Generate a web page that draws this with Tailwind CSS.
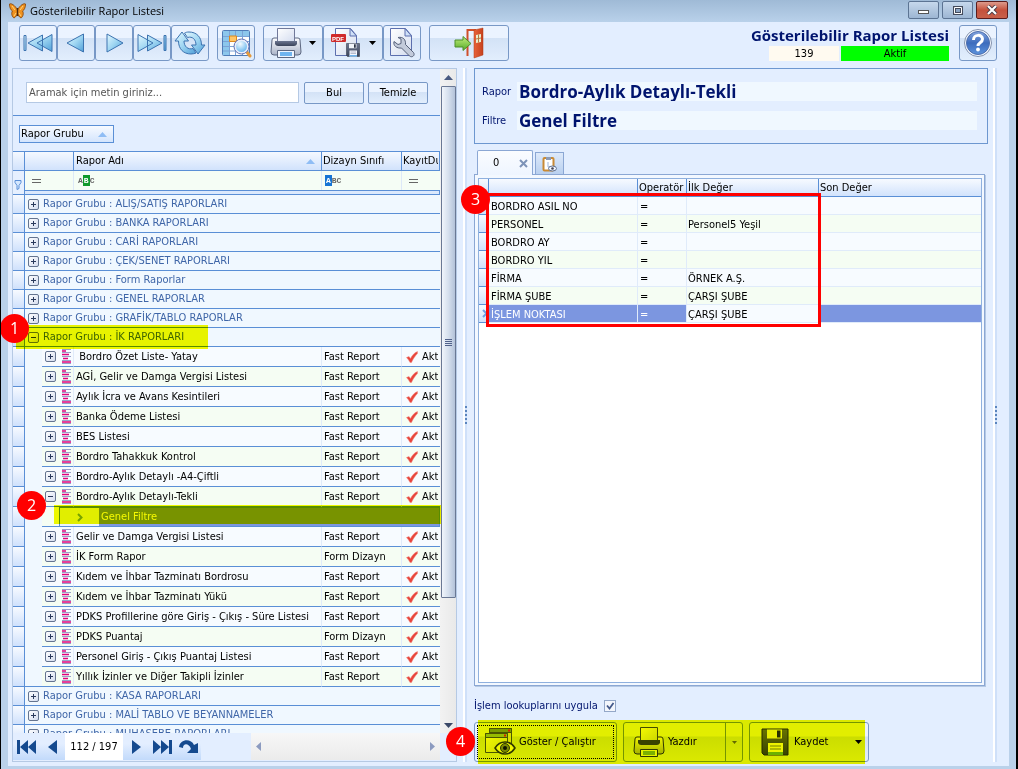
<!DOCTYPE html>
<html lang="tr">
<head>
<meta charset="utf-8">
<title>Gösterilebilir Rapor Listesi</title>
<script src="https://cdn.jsdelivr.net/npm/@tailwindcss/browser@4"></script>
</head>
<body class="relative flex h-screen flex-col overflow-hidden border-r-2 border-l border-black bg-[#bad1ea] font-['DejaVu_Sans_Condensed','DejaVu_Sans',sans-serif] text-[11px] leading-[14px] text-black">

<svg class="absolute h-0 w-0" aria-hidden="true">
  <defs>
    <linearGradient id="gArrow" x1="0" y1="0" x2="1" y2="1"><stop offset="0" stop-color="#e4f8ff"/><stop offset=".5" stop-color="#9fd6f2"/><stop offset="1" stop-color="#4f9fd8"/></linearGradient>
    <linearGradient id="gGrey" x1="0" y1="0" x2="0" y2="1"><stop offset="0" stop-color="#fdfdff"/><stop offset="1" stop-color="#aab4c8"/></linearGradient>
    <linearGradient id="gPage" x1="0" y1="0" x2="1" y2="1"><stop offset="0" stop-color="#ffffff"/><stop offset="1" stop-color="#d3dcef"/></linearGradient>
    <linearGradient id="gDark" x1="0" y1="0" x2="0" y2="1"><stop offset="0" stop-color="#6c7690"/><stop offset="1" stop-color="#3a4359"/></linearGradient>
    <radialGradient id="gLens" cx=".4" cy=".3" r=".8"><stop offset="0" stop-color="#f4fcff"/><stop offset="1" stop-color="#4aa8ea"/></radialGradient>
    <linearGradient id="gHelp" x1="0" y1="0" x2="0" y2="1"><stop offset="0" stop-color="#85a5de"/><stop offset=".5" stop-color="#3d6cbd"/><stop offset="1" stop-color="#5c93dc"/></linearGradient>
    <linearGradient id="gDoor" x1="0" y1="0" x2="1" y2="0"><stop offset="0" stop-color="#e8623a"/><stop offset="1" stop-color="#c5401c"/></linearGradient>
    <linearGradient id="gGreen" x1="0" y1="0" x2="0" y2="1"><stop offset="0" stop-color="#c3ee7c"/><stop offset="1" stop-color="#55ab28"/></linearGradient>

    <symbol id="expand" viewBox="0 0 11 11"><rect x=".5" y=".5" width="10" height="10" rx="1.5" fill="url(#gPage)" stroke="#64748f"/><path d="M3 5.5h5M5.500 3v5" stroke="#2a3a5c"/></symbol>
    <symbol id="collapse" viewBox="0 0 11 11"><rect x=".5" y=".5" width="10" height="10" rx="1.5" fill="url(#gPage)" stroke="#64748f"/><path d="M3 5.5h5" stroke="#2a3a5c"/></symbol>
    <symbol id="report" viewBox="0 0 9 15"><path d="M0 .5h9M0 3.500h9M0 7.500h9M0 11.500h9M0 14.500h9" stroke="#98a1c8"/><path d="M0 2h4M0 5.500h7M1 9.500h5M0 13h9" stroke="#e0007c" stroke-width="1.600"/></symbol>
    <symbol id="tick" viewBox="0 0 12 12"><path d="M.5 6.500 3 5.500l1.500 2C6 4.500 8.500 1.500 11.500.5v2C9 5 7 8 5.500 11.500H4C3 9.500 2 8 .5 6.500Z" fill="#e8453c" stroke="#f08a80" stroke-width=".5"/></symbol>
    <symbol id="printer" viewBox="0 0 32 32">
      <path d="M2 13q0-2 2-2h24q2 0 2 2l1 12q0 3-3 3H4q-3 0-3-3Z" fill="url(#gGrey)" stroke="#5d6881"/>
      <path d="M7.500 1.500h17V15h-17Z" fill="url(#gPage)" stroke="#71799a"/>
      <path d="M5 14h22v3q-1 2-3 2H8q-2 0-3-2Z" fill="url(#gDark)"/>
      <path d="M7.500 23.500h17v7h-17Z" fill="#eef5ff" stroke="#5d6881"/><path d="M10 25h12v4H10Z" fill="#6fb4ee"/>
    </symbol>
    <symbol id="printerDark" viewBox="0 0 32 32">
      <path d="M2 13q0-2 2-2h24q2 0 2 2l1 12q0 3-3 3H4q-3 0-3-3Z" fill="url(#gGrey)" stroke="#2f3745"/>
      <path d="M7.500 1.500h17V15h-17Z" fill="url(#gPage)" stroke="#454d5e"/>
      <path d="M5 14h22v3q-1 2-3 2H8q-2 0-3-2Z" fill="#3b4354"/>
      <path d="M7.500 23.500h17v7h-17Z" fill="#eef5ff" stroke="#2f3745"/><path d="M10 25h12v4H10Z" fill="#7eb44c"/>
    </symbol>
    <symbol id="floppy" viewBox="0 0 28 28">
      <path d="M1 1h26v26H3l-2-2Z" fill="url(#gDark)" stroke="#262d3c"/>
      <path d="M6 1.500h15v9H6Z" fill="#f1f4fa"/><path d="M16 2.500h3.500v7H16Z" fill="#2a3244"/>
      <path d="M7 15h15v12H7Z" fill="#f6f8ff"/><path d="M9 18h11M9 21h11" stroke="#79839c"/><path d="M7 24h15v3H7Z" fill="#6fb4ee"/>
    </symbol>
  </defs>
</svg>

<!-- Title bar -->
<header class="flex h-[22px] shrink-0 items-start bg-linear-to-b from-[#9fbad6] to-[#b9d1ea] pr-[8px] pl-[8px]">
  <svg class="mt-[3px] h-[16px] w-[17px]" viewBox="0 0 17 16"><path d="M8.500 7C6 2 2 0 .5 1c0 3 1 6 3 7C2 10 3 14 5 15c2-1 3-3 3.500-5 .5 2 1.500 4 3.500 5 2-1 3-5 1.500-7 2-1 3-4 3-7C15 0 11 2 8.500 7Z" fill="#f0921e" stroke="#8b4a0c" stroke-width=".9"/><path d="M8.500 5v8" stroke="#4d2a0c" stroke-width="1.400"/><path d="m3 3 3 4M14 3l-3 4M5 13l2-3M12 13l-2-3" stroke="#ffd37a"/></svg>
  <h1 class="ml-[4px] pt-[3px] font-['Open_Sans',sans-serif] text-[11px] leading-[16px]">Gösterilebilir Rapor Listesi</h1>
  <div class="ml-auto flex gap-[3px] pt-px">
    <button aria-label="Küçült" class="flex h-[18px] w-[31px] items-center justify-center rounded-[2px] border border-[#5c7493] bg-linear-to-b from-[#c6d8ec] to-[#9db6d3]"><span class="mt-[4px] block h-[4px] w-[11px] border border-[#555] bg-white"></span></button>
    <button aria-label="Büyüt" class="flex h-[18px] w-[31px] items-center justify-center rounded-[2px] border border-[#5c7493] bg-linear-to-b from-[#c6d8ec] to-[#9db6d3]"><svg class="h-[9px] w-[10px]" viewBox="0 0 10 9"><path d="M1.500 1.500h7v6h-7Z" fill="#8aa3c2" stroke="#444b5c" stroke-width="3"/><path d="M1.500 1.500h7v6h-7Z" fill="none" stroke="#fff"/></svg></button>
    <button aria-label="Kapat" class="flex h-[18px] w-[32px] items-center justify-center rounded-[2px] border border-[#5b1d1d] bg-linear-to-b from-[#dd9a8c] via-[#c5513c] to-[#c8604a]"><svg class="h-[10px] w-[12px]" viewBox="0 0 12 10"><path d="m2 1 8 8M10 1 2 9" stroke="#4a3a44" stroke-width="4"/><path d="m2 1 8 8M10 1 2 9" stroke="#fff" stroke-width="2.200"/></svg></button>
  </div>
</header>

<div class="mr-[7px] mb-[3px] ml-[7px] flex min-h-0 flex-1 flex-col bg-[#e3eeff]">

  <!-- Toolbar -->
  <div class="flex h-[46px] shrink-0 items-start pt-[3px] pr-[12px] pl-[11px]">
    <div class="flex">
      <button aria-label="İlk" class="flex h-[36px] w-[38px] items-center justify-center rounded-[3px] border border-[#7898c6] bg-linear-to-b from-[#ebf3ff] from-35% via-[#d3e2f6] via-36% to-[#e2eefd]"><svg class="h-[20px] w-[30px]" viewBox="0 0 30 20"><path d="M1 2.500h2v15H1ZM19.500 2v16L5 10ZM29 1.500v17L14 10Z" fill="url(#gArrow)" stroke="#3c73b0"/></svg></button>
      <button aria-label="Önceki" class="flex h-[36px] w-[38px] items-center justify-center rounded-[3px] border border-[#7898c6] bg-linear-to-b from-[#ebf3ff] from-35% via-[#d3e2f6] via-36% to-[#e2eefd]"><svg class="h-[20px] w-[20px]" viewBox="0 0 20 20"><path d="M17.500 1v18L1 10Z" fill="url(#gArrow)" stroke="#3c73b0"/></svg></button>
      <button aria-label="Sonraki" class="flex h-[36px] w-[38px] items-center justify-center rounded-[3px] border border-[#7898c6] bg-linear-to-b from-[#ebf3ff] from-35% via-[#d3e2f6] via-36% to-[#e2eefd]"><svg class="h-[20px] w-[20px]" viewBox="0 0 20 20"><path d="M3 1v18L19 10Z" fill="url(#gArrow)" stroke="#3c73b0"/></svg></button>
      <button aria-label="Son" class="flex h-[36px] w-[38px] items-center justify-center rounded-[3px] border border-[#7898c6] bg-linear-to-b from-[#ebf3ff] from-35% via-[#d3e2f6] via-36% to-[#e2eefd]"><svg class="h-[20px] w-[30px]" viewBox="0 0 30 20"><path d="M27 2.500h2v15h-2ZM10.500 2v16L25 10ZM1 1.500v17L16 10Z" fill="url(#gArrow)" stroke="#3c73b0"/></svg></button>
      <button aria-label="Yenile" class="flex h-[36px] w-[38px] items-center justify-center rounded-[3px] border border-[#7898c6] bg-linear-to-b from-[#ebf3ff] from-35% via-[#d3e2f6] via-36% to-[#e2eefd]"><svg class="h-[26px] w-[32px]" viewBox="0 0 32 26"><path d="M8 2 1 11h3.500c0 8 5 13 12.500 13 2 0 3.500-.5 5-1l-3-4.500c-5 1.500-9-2-9-7.500h4.500Z" fill="url(#gArrow)" stroke="#3c73b0"/><path d="M24 24 31 15h-3.500c0-8-5-13-12.500-13-2 0-3 .3-4.500 1l3 4.500c5-1.500 8.500 2 8.500 7.500h-4.500Z" fill="url(#gArrow)" stroke="#3c73b0"/></svg></button>
    </div>
    <button aria-label="Tabloda ara" class="ml-[8px] flex h-[36px] w-[38px] items-center justify-center rounded-[3px] border border-[#7898c6] bg-linear-to-b from-[#ebf3ff] from-35% via-[#d3e2f6] via-36% to-[#e2eefd]"><svg class="h-[30px] w-[31px]" viewBox="0 0 31 30"><rect x="1.500" y="2.500" width="27" height="25" rx="1" fill="#fff" stroke="#4f7db8"/><path d="M2 3h26v5H2ZM2 3h6v24H2Z" fill="#8cc7ec"/><path d="M8.500 3v24M14.500 3v24M21.500 3v24M2 8.500h26M2 13.500h26M2 18.500h26M2 23h26" stroke="#7ba3d6"/><path d="M8.500 8h7v5.500h-7Z" fill="#ffc668" stroke="#dd8a1d"/><path d="m25 23 4 5" stroke="#e59a3c" stroke-width="3" stroke-linecap="round"/><circle cx="20.500" cy="18.500" r="6.500" fill="url(#gLens)" stroke="#e9eefb" stroke-width="2"/><circle cx="20.500" cy="18.500" r="7.500" fill="none" stroke="#6273b4"/></svg></button>
    <div class="ml-[8px] flex">
      <button aria-label="Yazıcı" class="flex h-[36px] w-[60px] items-center gap-[7px] rounded-[3px] border border-[#7898c6] bg-linear-to-b from-[#ebf3ff] from-35% via-[#d3e2f6] via-36% to-[#e2eefd] pl-[6px]"><svg class="h-[32px] w-[32px]"><use href="#printer"/></svg><svg class="h-[4px] w-[7px]" viewBox="0 0 7 4"><path d="M0 0h7L3.500 4Z"/></svg></button>
      <button aria-label="PDF kaydet" class="flex h-[36px] w-[60px] items-center gap-[7px] rounded-[3px] border border-[#7898c6] bg-linear-to-b from-[#ebf3ff] from-35% via-[#d3e2f6] via-36% to-[#e2eefd] pl-[6px]"><svg class="h-[32px] w-[32px]" viewBox="0 0 32 32"><path d="M5.500 1.500h15l6 7v20h-21Z" fill="url(#gPage)" stroke="#5c6fae"/><path d="M20 1.500V9h6.500Z" fill="#cfe0f8" stroke="#5c6fae"/><rect x="1" y="7" width="15" height="8" rx="1" fill="#d02b2b"/><text x="2" y="13.500" font-family="Liberation Sans" font-size="6" font-weight="700" fill="#fff">PDF</text><svg x="16" y="16" width="14" height="14"><use href="#floppy"/></svg></svg><svg class="h-[4px] w-[7px]" viewBox="0 0 7 4"><path d="M0 0h7L3.500 4Z"/></svg></button>
      <button aria-label="Ayarlar" class="flex h-[36px] w-[38px] items-center justify-center rounded-[3px] border border-[#7898c6] bg-linear-to-b from-[#ebf3ff] from-35% via-[#d3e2f6] via-36% to-[#e2eefd]"><svg class="h-[32px] w-[28px]" viewBox="0 0 28 32"><path d="M2.500 1.500h15l6 7v20h-21Z" fill="url(#gPage)" stroke="#5c6fae"/><path d="M17 1.500V9h6.500Z" fill="#cfe0f8" stroke="#5c6fae"/><path d="M6 14.500l4 3 3-1V12l-3-1.500c5-1 8 2 7.500 7l8 8c2 3-1.500 5.500-4 3.500l-8-8C9 21.500 5 19 6 14.500Z" fill="#c3cbdb" stroke="#56617a"/></svg></button>
    </div>
    <button aria-label="Çıkış" class="ml-[8px] flex h-[36px] w-[80px] items-center justify-center rounded-[3px] border border-[#7898c6] bg-linear-to-b from-[#ebf3ff] from-35% via-[#d3e2f6] via-36% to-[#e2eefd]"><svg class="h-[32px] w-[30px]" viewBox="0 0 30 32"><path d="M13.500 29V3H22" fill="none" stroke="#d0502c" stroke-width="2"/><path d="m20 3 9-2v27l-9 3Z" fill="url(#gDoor)" stroke="#b03a17" stroke-width=".5"/><path d="m22 8 5-1v8l-5 1Z" fill="#e9edcf"/><path d="M24.500 7.500v8M22 12l5-1" stroke="#b8763d"/><path d="M1 13h8V9.500l8 7-8 7V20H1Z" fill="url(#gGreen)" stroke="#4d8f2b"/></svg></button>

    <div class="ml-auto flex flex-col items-end">
      <div class="font-['Open_Sans',sans-serif] text-[15px] leading-[21px] font-bold text-[#00146e]">Gösterilebilir Rapor Listesi</div>
      <div class="flex gap-[2px] text-center leading-[15px]"><div class="w-[70px] bg-[#fffaf0]">139</div><div class="w-[108px] bg-[#00ff00]">Aktif</div></div>
    </div>
    <button aria-label="Yardım" class="ml-[10px] flex h-[36px] w-[38px] items-center justify-center rounded-[3px] border border-[#7898c6] bg-linear-to-b from-[#ebf3ff] from-35% via-[#d3e2f6] via-36% to-[#e2eefd]"><svg class="h-[30px] w-[30px]" viewBox="0 0 30 30"><circle cx="15" cy="15" r="13.500" fill="#f4f8ff" stroke="#8492ad"/><circle cx="15" cy="15" r="11.500" fill="url(#gHelp)" stroke="#4c6eae"/><path d="M10.500 12c0-6 9-6 9-1 0 4-4.500 3.500-4.500 7" fill="none" stroke="#fff" stroke-width="3"/><circle cx="15" cy="21.500" r="1.900" fill="#fff"/></svg></button>
  </div>

  <div class="flex min-h-0 flex-1 pl-[4px]">

    <!-- Report list -->
    <section class="mb-[4px] flex w-[445px] shrink-0 border border-[#b5c9e4]">
      <div class="flex min-w-0 flex-1 flex-col">
        <form class="flex h-[47px] shrink-0 items-start gap-[4px] border-b border-[#5a8fd6] pt-[13px] pl-[13px]" onsubmit="return false">
          <input type="text" aria-label="Ara" placeholder="Aramak için metin giriniz..." class="h-[21px] w-[273px] border border-[#b5c9e4] bg-white pl-[2px] placeholder:text-[#555]">
          <button class="ml-px h-[22px] w-[60px] rounded-[2px] border border-[#7898c6] bg-linear-to-b from-[#ebf3ff] from-45% via-[#d3e2f6] via-46% to-[#e2eefd]">Bul</button>
          <button class="h-[22px] w-[60px] rounded-[2px] border border-[#7898c6] bg-linear-to-b from-[#ebf3ff] from-45% via-[#d3e2f6] via-46% to-[#e2eefd]">Temizle</button>
        </form>
        <div class="h-[35px] shrink-0 pt-[9px] pl-[6px]">
          <button class="flex h-[18px] w-[95px] items-center justify-between border border-[#5a8fd6] bg-linear-to-b from-[#f7faff] to-[#d4e5fd] pr-[6px] pl-px">Rapor Grubu<svg class="h-[5px] w-[9px]" viewBox="0 0 9 5"><path d="M4.500 0 9 5H0Z" fill="#8fbdf5"/></svg></button>
        </div>
        <div class="min-h-0 flex-1 overflow-hidden">
          <table class="w-full table-fixed border-separate border-spacing-0 text-left whitespace-nowrap">
            <colgroup><col class="w-[12px]"><col class="w-[17px]"><col class="w-[32px]"><col><col class="w-[80px]"><col class="w-[38px]"></colgroup>
            <thead>
              <tr class="h-[20px] bg-linear-to-b from-[#f7faff] to-[#cfe1fc]">
                <th class="border-y border-r border-[#5a8fd6] p-0"></th><th colspan="2" class="border-y border-r border-[#5a8fd6] p-0"></th>
                <th class="border-y border-r border-[#5a8fd6] p-0 pl-[2px] font-normal"><div class="flex items-center justify-between pr-[6px]">Rapor Adı<svg class="h-[5px] w-[9px]" viewBox="0 0 9 5"><path d="M4.500 0 9 5H0Z" fill="#8fbdf5"/></svg></div></th>
                <th class="border-y border-r border-[#5a8fd6] p-0 pl-px font-normal">Dizayn Sınıfı</th>
                <th class="border-y border-r border-[#5a8fd6] p-0 pl-px font-normal"><div class="mr-px overflow-hidden">KayıtDurumu</div></th>
              </tr>
              <tr class="h-[19px] bg-[#f5fdf5]">
                <td class="border-r border-[#5a8fd6] bg-[#e6f0ff] p-0 align-bottom"><svg class="ml-[1px] h-[10px] w-[8px]" viewBox="0 0 8 10"><path d="M1 .5h6v2L5 5.500v3L3 9.500v-4L1 2.500Z" fill="#d5e8ff" stroke="#5a8fd6"/></svg></td>
                <td colspan="2" class="border-r border-[#dde9f8] p-0 pl-[7px]"><svg class="h-[4px] w-[9px]" viewBox="0 0 9 4"><path d="M0 .5h9M0 3.500h9" stroke="#666"/></svg></td>
                <td class="border-r border-[#dde9f8] p-0 pl-[4px]"><span class="flex font-['Liberation_Mono',monospace] text-[8px] leading-[11px] font-bold text-[#666]"><span>A</span><span class="bg-[#109a2c] px-px text-white">B</span><span>C</span></span></td>
                <td class="border-r border-[#dde9f8] p-0 pl-[3px]"><span class="flex font-['Liberation_Mono',monospace] text-[8px] leading-[11px] font-bold text-[#666]"><span class="bg-[#1674d4] px-px text-white">A</span><span>BC</span></span></td>
                <td class="p-0 pl-[7px]"><svg class="h-[4px] w-[9px]" viewBox="0 0 9 4"><path d="M0 .5h9M0 3.500h9" stroke="#666"/></svg></td>
              </tr>
              <tr class="h-[5px] leading-[0]"><td class="border-r border-b border-[#5a8fd6] bg-[#e6f0ff] p-0"></td><td colspan="5" class="border-y border-r border-[#5a8fd6] bg-[#dbe9fd] p-0"></td></tr>
            </thead>
            <tbody id="reports"></tbody>
          </table>
        </div>
        <!-- Navigator -->
        <div class="flex h-[28px] shrink-0 justify-between">
          <div class="flex h-[27px] items-center bg-linear-to-b from-[#e3eeff] from-40% to-[#c2dafb] text-[#154a8f]">
            <button aria-label="İlk kayıt" class="flex w-[26px] justify-center"><svg class="h-[14px] w-[19px]" viewBox="0 0 19 14"><path d="M0 0h3v14H0ZM11 0v14L3 7ZM19 0v14l-8-7Z" fill="currentColor"/></svg></button>
            <button aria-label="Önceki kayıt" class="flex w-[26px] justify-center"><svg class="h-[14px] w-[9px]" viewBox="0 0 9 14"><path d="M9 0v14L0 7Z" fill="currentColor"/></svg></button>
            <div class="h-[27px] w-[58px] bg-white text-center leading-[28px] text-black">112 / 197</div>
            <button aria-label="Sonraki kayıt" class="flex w-[26px] justify-center"><svg class="h-[14px] w-[9px]" viewBox="0 0 9 14"><path d="M0 0v14l9-7Z" fill="currentColor"/></svg></button>
            <button aria-label="Son kayıt" class="flex w-[26px] justify-center"><svg class="h-[14px] w-[19px]" viewBox="0 0 19 14"><path d="M16 0h3v14h-3ZM8 0v14l8-7ZM0 0v14l8-7Z" fill="currentColor"/></svg></button>
            <button aria-label="Git" class="flex w-[26px] justify-center"><svg class="h-[13px] w-[19px]" viewBox="0 0 19 13"><path d="M0 7C1-1 12-2 15 5l4-2v10H8l4-4C10 3 4 3 4 8Z" fill="currentColor"/></svg></button>
          </div>
          <div class="flex h-[27px] w-[189px] items-center justify-between bg-linear-to-b from-[#f7f7f7] to-[#ebebeb] px-[5px]">
            <svg class="h-[9px] w-[5px]" viewBox="0 0 5 9"><path d="M5 0v9L0 4.500Z" fill="#8c9bc0"/></svg>
            <svg class="h-[9px] w-[5px]" viewBox="0 0 5 9"><path d="M0 0v9l5-4.500Z" fill="#8c9bc0"/></svg>
          </div>
        </div>
      </div>
      <!-- Vertical scrollbar -->
      <div class="mb-[28px] flex w-[16px] shrink-0 flex-col items-center bg-linear-to-r from-[#f2f2f2] to-[#e9e9e9]">
        <svg class="my-[6px] h-[5px] w-[9px]" viewBox="0 0 9 5"><path d="M4.500 0 9 5H0Z" fill="#4a5a80"/></svg>
        <div class="flex h-[512px] w-[15px] flex-col items-center justify-center gap-px rounded-[1px] border border-[#6a7894] bg-linear-to-r from-[#f1f5fb] via-[#d5dfed] to-[#b3c2d9]"><span class="h-px w-[7px] bg-[#51618a]"></span><span class="h-px w-[7px] bg-[#51618a]"></span><span class="h-px w-[7px] bg-[#51618a]"></span><span class="h-px w-[7px] bg-[#51618a]"></span></div>
        <svg class="mt-auto mb-[5px] h-[5px] w-[9px]" viewBox="0 0 9 5"><path d="M0 0h9L4.500 5Z" fill="#3a4867"/></svg>
      </div>
    </section>

    <!-- Splitter -->
    <div class="mr-[7px] mb-[4px] ml-[6px] flex w-[4px] shrink-0 items-center border-l-2 border-white bg-[#cfe0f9]"><svg class="h-[18px] w-[2px]" viewBox="0 0 2 18"><path d="M1 0v18" stroke="#5a84bd" stroke-width="2" stroke-dasharray="2 2"/></svg></div>

    <!-- Filter panel -->
    <section class="flex min-w-0 flex-1 flex-col">
      <div class="grid h-[76px] shrink-0 grid-cols-[35px_1fr] content-start gap-x-0 gap-y-[10px] border border-[#6d97d0] pt-[13px] pr-[10px] pl-[7px] text-[#00146e]">
        <label for="rapor" class="leading-[19px]">Rapor</label><input id="rapor" readonly value="Bordro-Aylık Detaylı-Tekli" class="h-[19px] w-full bg-[#f0f8ff] pl-[2px] font-['Open_Sans',sans-serif] text-[17px] leading-[19px] font-bold">
        <label for="filtre" class="leading-[19px]">Filtre</label><input id="filtre" readonly value="Genel Filtre" class="h-[19px] w-full bg-[#f0f8ff] pl-[2px] font-['Open_Sans',sans-serif] text-[17px] leading-[19px] font-bold">
      </div>
      <div class="mt-[6px] flex h-[24px] shrink-0 items-end gap-[2px] pl-[3px]">
        <button class="z-10 -mb-px flex h-[25px] w-[56px] items-center justify-between rounded-t-[2px] border border-b-0 border-[#8ba7d4] bg-linear-to-b from-[#fafcff] to-[#eef5ff] pr-[4px] pl-[15px]">0<svg class="h-[9px] w-[9px]" viewBox="0 0 9 9"><path d="m1 1 7 7M8 1 1 8" stroke="#7d93b8" stroke-width="2"/></svg></button>
        <button aria-label="Filtre ekle" class="flex h-[22px] w-[29px] items-center justify-center border border-b-0 border-[#8ba7d4] bg-linear-to-b from-[#dde9fa] to-[#b9d0f0]"><svg class="h-[16px] w-[15px]" viewBox="0 0 15 16"><rect x="1.500" y="2" width="10" height="12.500" rx="1" fill="#fff" stroke="#c98a35" stroke-width="2"/><path d="M4 1h5v3H4Z" fill="#8d9bb5"/><path d="M6 6v5h3" fill="none" stroke="#9db4dc"/><ellipse cx="10.500" cy="12.500" rx="4" ry="2.500" fill="#eef4ff" stroke="#5f6f8e"/><circle cx="10.500" cy="12.500" r="1.300" fill="#445"/></svg></button>
      </div>
      <div class="mr-[3px] min-h-0 flex-1 border border-[#8ba7d4] bg-[#f3f8ff] p-[3px] pr-[2px] pb-[2px] shadow-[1px_1px_0_#b5c9e4]">
        <div class="h-full border border-[#8fb0de] bg-white">
          <table class="w-full table-fixed border-separate border-spacing-0 text-left whitespace-nowrap">
            <colgroup><col class="w-[10px]"><col class="w-[149px]"><col class="w-[49px]"><col class="w-[132px]"><col></colgroup>
            <thead><tr class="h-[18px] bg-linear-to-b from-[#f7faff] to-[#cfe1fc]">
              <th class="border-r border-b border-[#5a8fd6] p-0"></th><th class="border-r border-b border-[#5a8fd6] p-0"></th>
              <th class="border-r border-b border-[#5a8fd6] p-0 pt-px pl-px font-normal">Operatör</th><th class="border-r border-b border-[#5a8fd6] p-0 pt-px pl-px font-normal">İlk Değer</th><th class="border-b border-[#5a8fd6] p-0 pt-px pl-px font-normal">Son Değer</th>
            </tr></thead>
            <tbody id="filters"></tbody>
          </table>
        </div>
      </div>
      <div class="flex h-[36px] shrink-0 items-center gap-[6px] pt-[3px] text-[#00146e]">
        <label for="lookup">İşlem lookuplarını uygula</label>
        <span class="relative flex"><input id="lookup" type="checkbox" checked class="h-[12px] w-[12px] appearance-none border border-[#93a7c8] bg-[#f3f6fc]"><svg class="pointer-events-none absolute inset-[2px] h-[8px] w-[8px]" viewBox="0 0 8 8"><path d="m1 3.500 2.500 3L7.500 1" fill="none" stroke="#44598a" stroke-width="1.800"/></svg></span>
      </div>
      <div class="mb-[4px] flex h-[40px] shrink-0 gap-[6px]">
        <button class="flex w-[143px] items-center gap-[5px] rounded-[3px] border border-[#7898c6] bg-linear-to-b from-[#ebf3ff] from-35% via-[#d3e2f6] via-36% to-[#e2eefd] p-[2px]"><span class="flex h-full w-full items-center gap-[3px] border border-dotted border-black pl-[6px]"><svg class="h-[30px] w-[32px]" viewBox="0 0 32 30"><path d="M5.500 1.500h22v20h-22Z" fill="#dfe6f4" stroke="#4c5874"/><path d="M5.500 1.500h22v4h-22Z" fill="#7f9f3c" stroke="#4c5874"/><path d="M1.500 6.500h22v19h-22Z" fill="url(#gPage)" stroke="#4c5874"/><path d="M1.500 6.500h22v4h-22Z" fill="#9cc061" stroke="#4c5874"/><path d="M20 8.500h2M24 3.500h2" stroke="#d22" stroke-width="2"/><path d="M11 21c5-8 15-8 20 0-5 8-15 8-20 0Z" fill="#fafcff" stroke="#30384a" stroke-width="1.500"/><circle cx="21" cy="21" r="4.500" fill="#7e8ca8" stroke="#30384a"/><circle cx="21" cy="21" r="2" fill="#10141c"/></svg>Göster / Çalıştır</span></button>
        <div class="flex w-[120px] rounded-[3px] border border-[#7898c6] bg-linear-to-b from-[#ebf3ff] from-35% via-[#d3e2f6] via-36% to-[#e2eefd]"><button class="flex flex-1 items-center gap-[3px] border-r border-[#7898c6] pl-[9px]"><svg class="h-[32px] w-[32px]"><use href="#printerDark"/></svg>Yazdır</button><button aria-label="Yazdırma seçenekleri" class="flex w-[16px] items-center justify-center"><svg class="h-[3px] w-[5px]" viewBox="0 0 5 3"><path d="M0 0h5L2.500 3Z" fill="#666c20"/></svg></button></div>
        <button class="flex w-[120px] items-center rounded-[3px] border border-[#7898c6] bg-linear-to-b from-[#ebf3ff] from-35% via-[#d3e2f6] via-36% to-[#e2eefd] pr-[6px] pl-[11px]"><svg class="mr-[5px] h-[28px] w-[28px]"><use href="#floppy"/></svg>Kaydet<svg class="ml-auto h-[4px] w-[7px]" viewBox="0 0 7 4"><path d="M0 0h7L3.500 4Z"/></svg></button>
      </div>
    </section>

    <!-- Right splitter -->
    <div class="mr-[12px] mb-[4px] ml-[5px] flex w-[4px] shrink-0 items-center border-l-2 border-white bg-[#cfe0f9]"><svg class="h-[18px] w-[2px]" viewBox="0 0 2 18"><path d="M1 0v18" stroke="#5a84bd" stroke-width="2" stroke-dasharray="2 2"/></svg></div>
  </div>
</div>

<!-- Highlighter marks and numbered steps laid over the window -->
<div class="pointer-events-none absolute top-[325px] left-[15px] h-[24px] w-[192px] bg-[#f6fa00] mix-blend-multiply"></div>
<div class="pointer-events-none absolute top-[505px] left-[53px] h-[19px] w-[387px] bg-[#f6fa00] mix-blend-multiply"></div>
<div class="pointer-events-none absolute top-[720px] left-[477px] h-[44px] w-[387px] bg-[#f6fa00] mix-blend-multiply"></div>
<div class="pointer-events-none absolute top-[193px] left-[485px] h-[134px] w-[335px] border-3 border-[#f00]"></div>
<div class="pointer-events-none absolute top-[314px] -left-[1px] h-[29px] w-[29px] rounded-full bg-[#f00] text-center font-['Open_Sans',sans-serif] text-[16px] leading-[28px] text-white">1</div>
<div class="pointer-events-none absolute top-[491px] left-[16px] h-[29px] w-[29px] rounded-full bg-[#f00] text-center font-['Open_Sans',sans-serif] text-[16px] leading-[28px] text-white">2</div>
<div class="pointer-events-none absolute top-[185px] left-[460px] h-[29px] w-[29px] rounded-full bg-[#f00] text-center font-['Open_Sans',sans-serif] text-[16px] leading-[28px] text-white">3</div>
<div class="pointer-events-none absolute top-[727px] left-[445px] h-[29px] w-[29px] rounded-full bg-[#f00] text-center font-['Open_Sans',sans-serif] text-[16px] leading-[28px] text-white">4</div>

<script>
const ind = '<td class="border-r border-b border-[#5a8fd6] bg-linear-to-b from-[#f7faff] to-[#cfe1fc] p-0"></td>';
const group = (name, icon = 'expand') => `<tr class="h-[19px] bg-[#f0f8ff] text-[#3f66a8]">${ind}<td colspan="5" class="border-b border-[#5a8fd6] p-0 pl-[3px]"><div class="flex items-center gap-[4px]"><svg class="h-[11px] w-[11px]"><use href="#${icon}"/></svg>Rapor Grubu : ${name}</div></td></tr>`;
const report = ([name, kind = 'Fast Report', icon = 'expand'], i, all) => `<tr class="h-[20px] ${i % 2 ? 'bg-[#f5fdf3]' : 'bg-[#f7fbff]'}">${ind}<td class="${i === all.length - 1 ? 'border-b border-[#5a8fd6]' : ''} bg-[#f0f8ff] p-0"></td>
<td class="border-r border-b border-r-[#e0ebfa] border-b-[#5a8fd6] p-0 pl-[3px]"><div class="flex items-center gap-[6px]"><svg class="h-[11px] w-[11px]"><use href="#${icon}"/></svg><svg class="h-[15px] w-[9px]"><use href="#report"/></svg></div></td>
<td class="border-r border-b border-r-[#e0ebfa] border-b-[#5a8fd6] p-0 pl-[2px]">${name}</td><td class="border-r border-b border-r-[#e0ebfa] border-b-[#5a8fd6] p-0 pl-[2px]">${kind}</td>
<td class="border-b border-[#5a8fd6] p-0 pl-[4px]"><div class="mr-[2px] flex items-center gap-[4px] overflow-hidden"><svg class="h-[12px] w-[12px] shrink-0"><use href="#tick"/></svg>Aktif</div></td></tr>`;
const child = `<tr class="h-[20px]">${ind}<td class="bg-[#f0f8ff] p-0"></td><td colspan="4" class="border-b border-[#5a8fd6] bg-[#f5fdf3] p-0 pl-[17px]"><div class="flex h-[19px] border border-b-0 border-[#5a8fd6] bg-[#7c96e0] leading-[18px] text-white"><span class="flex w-[39px] items-center justify-center bg-[#eaf3ff]"><svg class="h-[9px] w-[6px]" viewBox="0 0 6 9"><path d="m1 1 3.500 3.500L1 8" fill="none" stroke="#7aa5e0" stroke-width="2"/></svg></span><span class="pl-[2px]">Genel Filtre</span></div></td></tr>`;
const list = [['&nbsp;Bordro Özet Liste- Yatay'], ['AGİ, Gelir ve Damga Vergisi Listesi'], ['Aylık İcra ve Avans Kesintileri'], ['Banka Ödeme Listesi'], ['BES Listesi'], ['Bordro Tahakkuk Kontrol'], ['Bordro-Aylık Detaylı -A4-Çiftli'], ['Bordro-Aylık Detaylı-Tekli', 'Fast Report', 'collapse'], ['Gelir ve Damga Vergisi Listesi'], ['İK Form Rapor', 'Form Dizayn'], ['Kıdem ve İhbar Tazminatı Bordrosu'], ['Kıdem ve İhbar Tazminatı Yükü'], ['PDKS Profillerine göre Giriş - Çıkış - Süre Listesi'], ['PDKS Puantaj', 'Form Dizayn'], ['Personel Giriş - Çıkış Puantaj Listesi'], ['Yıllık İzinler ve Diğer Takipli İzinler']].map(report);
list.splice(8, 0, child);
document.getElementById('reports').innerHTML =
  ['ALIŞ/SATIŞ RAPORLARI', 'BANKA RAPORLARI', 'CARİ RAPORLARI', 'ÇEK/SENET RAPORLARI', 'Form Raporlar', 'GENEL RAPORLAR', 'GRAFİK/TABLO RAPORLAR'].map(n => group(n)).join('')
  + group('İK RAPORLARI', 'collapse') + list.join('')
  + ['KASA RAPORLARI', 'MALİ TABLO VE BEYANNAMELER', 'MUHASEBE RAPORLARI'].map(n => group(n)).join('');

document.getElementById('filters').innerHTML = [['BORDRO ASIL NO', ''], ['PERSONEL', 'Personel5 Yeşil'], ['BORDRO AY', ''], ['BORDRO YIL', ''], ['FİRMA', 'ÖRNEK A.Ş.'], ['FİRMA ŞUBE', 'ÇARŞI ŞUBE'], ['İŞLEM NOKTASI', 'ÇARŞI ŞUBE']].map(([n, v], i) => {
  const sel = i === 6;
  const bg = sel ? 'bg-[#7c96e0] text-white' : i % 2 ? 'bg-[#f5fdf3]' : 'bg-[#f7fbff]';
  const cell = 'border-r border-b border-[#e0ebfa] p-0 pt-[2px]';
  return `<tr class="h-[18px] ${bg}"><td class="border-r border-b border-[#5a8fd6] bg-linear-to-b from-[#f7faff] to-[#cfe1fc] p-0 pl-[3px]">${sel ? '<svg class="h-[9px] w-[6px]" viewBox="0 0 6 9"><path d="m1 1 3.500 3.500L1 8" fill="none" stroke="#6f9fe4" stroke-width="2"/></svg>' : ''}</td><td class="${cell} pl-[2px]">${n}</td><td class="${cell} pl-[2px]">=</td><td class="${cell} pl-px ${sel ? 'bg-[#f7fbff] text-black' : ''}">${v}</td><td class="border-b border-[#e0ebfa] p-0"></td></tr>`;
}).join('');
</script>
</body>
</html>
